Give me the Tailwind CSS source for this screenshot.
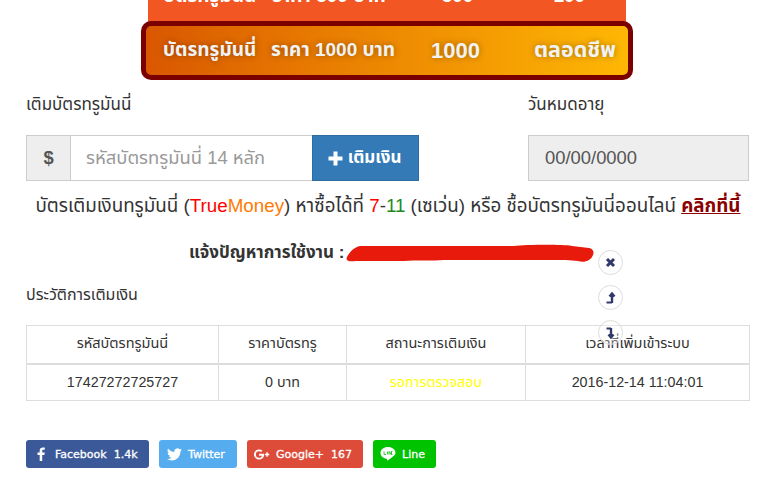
<!DOCTYPE html>
<html lang="th"><head><meta charset="utf-8"><script src="https://cdn.jsdelivr.net/npm/@tailwindcss/browser@4"></script></head>
<body class="bg-white text-[#333] overflow-hidden h-[495px] font-['Liberation_Sans','Noto_Sans_Thai','Noto_Sans',sans-serif]">
<div class="relative w-[769px] h-[495px] overflow-hidden">
  <div class="ml-[148px] w-[478px] h-[40px] -mt-[15px] pb-[18px] bg-[#f15623] text-white font-bold text-[19px] flex items-center px-[15px] gap-[16px] whitespace-nowrap"><span>บัตรทรูมันนี่</span><span>ราคา 500 บาท</span><span class="ml-[40px]">500</span><span class="ml-[64px]">100</span></div>
  <div class="ml-[141px] w-[492px] -mt-[4px] h-[59px] relative border-[5px] border-[#7b0000] rounded-[10px] bg-gradient-to-r from-[#d95700] to-[#feb704] text-[#f2f2f2] font-bold flex items-center text-[19px] [text-shadow:0_0_6px_rgba(0,0,0,0.35)] whitespace-nowrap">
    <span class="ml-[17px] w-[108px]">บัตรทรูมันนี่</span><span class="w-[160px]">ราคา 1000 บาท</span><span class="text-[22px] w-[103px]">1000</span><span class="text-[21.5px]">ตลอดชีพ</span>
  </div>
  <div class="flex pl-[26px] pr-[20px] mt-[15px]">
    <div class="w-[393px] shrink-0">
      <div class="text-[17px] leading-[20px]">เติมบัตรทรูมันนี่</div>
      <div class="flex h-[46px] mt-[20px] text-[18.4px]">
        <div class="w-[45px] flex items-center justify-center bg-[#eee] border border-[#ccc] font-bold text-[#555]">$</div>
        <div class="w-[242px] flex items-center pl-[15px] border-y border-[#ccc] text-[#999] whitespace-nowrap">รหัสบัตรทรูมันนี่ 14 หลัก</div>
        <div class="w-[107px] -ml-px flex items-center justify-center gap-[5px] pr-[2px] bg-[#337ab7] border border-[#2e6da4] text-white font-bold text-[17px] whitespace-nowrap">
          <svg width="15" height="15" viewBox="0 0 15 15"><path d="M5.500 0.5h4v5h5v4h-5v5h-4v-5h-5v-4h5z" fill="#fff"/></svg>เติมเงิน</div>
      </div>
    </div>
    <div class="ml-[109px] w-[221px] shrink-0">
      <div class="text-[17px] leading-[20px]">วันหมดอายุ</div>
      <div class="h-[46px] mt-[20px] flex items-center pl-[16px] bg-[#eee] border border-[#ccc] text-[#555] text-[18.4px]">00/00/0000</div>
    </div>
  </div>
  <p class="mt-[14px] ml-[7px] text-center text-[18.8px] leading-[22px] whitespace-nowrap">บัตรเติมเงินทรูมันนี่ (<span class="text-[#f00]">True</span><span class="text-[#ff7a00]">Money</span>) หาซื้อได้ที่ <span class="text-[#f00]">7</span>-<span class="text-[#1a8a1a]">11</span> (เซเว่น) หรือ ชื้อบัตรทรูมันนี่ออนไลน์ <a class="text-[#8b0000] font-bold underline">คลิกที่นี้</a></p>
  <div class="mt-[26px] ml-[189px] text-[17px] leading-[20px] font-bold whitespace-nowrap">แจ้งปัญหาการใช้งาน :</div>
  <div class="mt-[22px] ml-[26px] text-[16px] leading-[20px]">ประวัติการเติมเงิน</div>
  <table class="ml-[26px] mt-[20px] w-[724px] table-fixed border-collapse border border-[#ddd] text-[14.5px] text-center">
    <thead><tr class="h-[38px] border-b-2 border-[#ddd]">
      <th class="w-[192px] border border-[#ddd] font-normal">รหัสบัตรทรูมันนี่</th>
      <th class="w-[128px] border border-[#ddd] font-normal">ราคาบัตรทรู</th>
      <th class="w-[179px] border border-[#ddd] font-normal">สถานะการเติมเงิน</th>
      <th class="border border-[#ddd] font-normal">เวลาที่เพิ่มเข้าระบบ</th></tr></thead>
    <tbody><tr class="h-[37px] text-[14.3px]">
      <td class="border border-[#ddd]">17427272725727</td>
      <td class="border border-[#ddd]">0 บาท</td>
      <td class="border border-[#ddd] text-[#ffff00]">รอการตรวจสอบ</td>
      <td class="border border-[#ddd]">2016-12-14 11:04:01</td></tr></tbody>
  </table>
  <div class="flex gap-[10px] ml-[26px] mt-[39px] text-white text-[11px] whitespace-nowrap font-['DejaVu_Sans',sans-serif] [-webkit-text-stroke:0.3px_white] [&>div]:h-[28px] [&>div]:rounded-[3px] [&>div]:flex [&>div]:items-center">
    <div class="w-[123px] bg-[#3b5998] pl-[10px] gap-[9px]"><svg width="10" height="14" viewBox="0 0 10 16"><path d="M6.400 16V9h2.500l.4-2.800H6.400V4.500c0-.8.2-1.300 1.400-1.300h1.500V.7C9 .7 8.200.6 7.200.6 5 .6 3.500 1.900 3.500 4.300v1.900H1V9h2.500v7z" fill="#fff"/></svg><span class="mt-[2px]">Facebook&nbsp; 1.4k</span></div>
    <div class="w-[78px] bg-[#55acee] pl-[8px] gap-[6px]"><svg width="15" height="13" viewBox="0 0 24 20"><path d="M24 2.400a10 10 0 0 1-2.800.8A5 5 0 0 0 23.300.5a10 10 0 0 1-3.100 1.200 4.900 4.900 0 0 0-8.400 4.500A14 14 0 0 1 1.700.9a4.900 4.900 0 0 0 1.500 6.600 5 5 0 0 1-2.200-.6v.1a4.900 4.900 0 0 0 3.900 4.800 5 5 0 0 1-2.200.1 4.900 4.900 0 0 0 4.600 3.400A10 10 0 0 1 0 17.300 14 14 0 0 0 7.500 19.500c9 0 14-7.500 14-14v-.6A10 10 0 0 0 24 2.400z" fill="#fff"/></svg><span class="mt-[2px]">Twitter</span></div>
    <div class="w-[116px] bg-[#dd4b39] pl-[7px] gap-[6px]"><svg width="16" height="11" viewBox="0 0 22 14"><path d="M7 6v2.600h4C10.700 10.200 9.300 11.400 7 11.400A4.400 4.400 0 0 1 7 2.600c1.100 0 2.100.4 2.800 1.100l1.900-1.900A7 7 0 1 0 14 7c0-.4 0-.7-.1-1zM19 6V4h-2v2h-2v2h2v2h2V8h2V6z" fill="#fff"/></svg><span class="mt-[2px]">Google+&nbsp; 167</span></div>
    <div class="w-[63px] bg-[#00c300] pl-[7px] gap-[6px]"><svg width="16" height="16" viewBox="0 0 16 16"><path d="M8 1C3.800 1 .5 3.600.5 6.900c0 2.900 2.600 5.300 6.100 5.800.6.100.5.700.4 1.300 0 .4.300.5.700.3 1.800-1 4.400-2.700 6-4.500C14.900 8.800 15.500 7.900 15.500 6.900 15.500 3.600 12.200 1 8 1z" fill="#fff"/><path d="M4 5.500v3h2M7.500 5.500v3M9 8.500v-3l2 3v-3M12.500 5.500h-1v3h1" stroke="#00c300" stroke-width=".8" fill="none"/></svg><span class="mt-[2px]">Line</span></div>
  </div>
  <svg class="absolute left-[344px] top-[243px]" width="252" height="22" viewBox="0 0 252 22"><path d="M3 14C5 10 10 4 16 3L170 3C180 2 215 1 228 3L245 5C250 6 250 10 249 12C247 18 240 20 234 18L222 17L100 17C90 18 70 17 60 18L12 18C6 19 1 18 3 14z" fill="#e81a0c"/></svg>
  <div class="absolute left-[598px] top-[250px] w-[25px] h-[25px] rounded-full bg-white border border-[#ddd] flex items-center justify-center"><svg width="11" height="11" viewBox="0 0 11 11"><path d="M2 2l7 7M9 2l-7 7" stroke="#2f3a6b" stroke-width="3"/></svg></div>
  <div class="absolute left-[598px] top-[285px] w-[25px] h-[25px] rounded-full bg-white border border-[#ddd] flex items-center justify-center"><svg width="11" height="12" viewBox="0 0 11 12"><path d="M7 11V3M4.500 4.500L7 1.500l2.500 3" stroke="#2f3a6b" stroke-width="2.400" fill="none"/><path d="M1.500 10.500H7" stroke="#2f3a6b" stroke-width="2"/></svg></div>
  <div class="absolute left-[598px] top-[320px] w-[25px] h-[25px] rounded-full bg-white/30 border border-[#ddd] flex items-center justify-center"><svg width="11" height="12" viewBox="0 0 11 12"><path d="M6 1v8M3.500 7.500L6 10.500l2.500-3" stroke="#2f3a6b" stroke-width="2.400" fill="none"/><path d="M1.500 1.500H6" stroke="#2f3a6b" stroke-width="2"/></svg></div>
</div>
</body></html>
